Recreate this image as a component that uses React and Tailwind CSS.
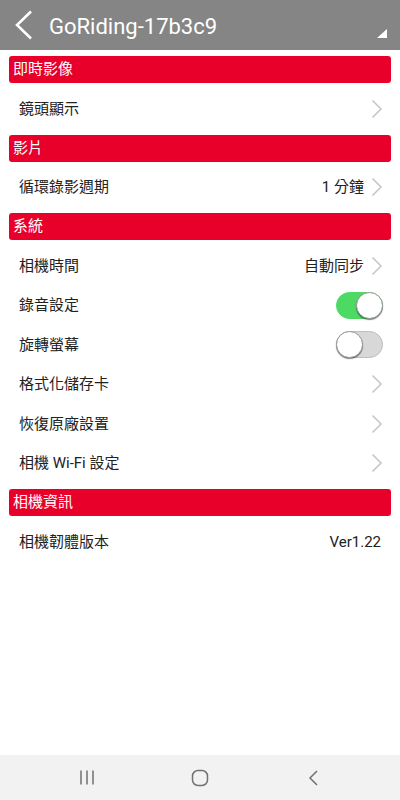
import React, { useState } from 'react';

const Chevron = () => (
  <svg width="12" height="20" viewBox="0 0 12 20" className="shrink-0">
    <path d="M1.5 1.5 L10 10 L1.5 18.5" fill="none" stroke="#c7c7c7" strokeWidth="1.6" />
  </svg>
);

const Toggle = ({ on, onClick }) => (
  <button
    onClick={onClick}
    className={`relative w-[47px] h-[27px] rounded-full border ${on ? 'bg-[#4cd964] border-[#4cd964]' : 'bg-[#d8d8d8] border-[#bdbdbd]'}`}
  >
    <span
      className={`absolute top-[-1px] w-[27px] h-[27px] rounded-full bg-white border border-[#9a9a9a] shadow-[0_1px_1px_rgba(0,0,0,0.5)] ${on ? 'right-[-1px]' : 'left-[-1px]'}`}
    />
  </button>
);

const Section = ({ title }) => (
  <div className="mx-[9px] my-[6px] h-[27px] rounded-[3px] bg-[#e8002b] flex items-center px-[4px] text-white text-[15px]">
    {title}
  </div>
);

const Row = ({ label, value, chevron, children }) => (
  <div className={`h-[39.5px] flex items-center pl-[19px] ${chevron || children ? 'pr-[17px]' : 'pr-[19px]'} text-[#222] text-[15px]`}>
    <span className="flex-1">{label}</span>
    {value && <span className={chevron ? 'mr-[7px]' : ''}>{value}</span>}
    {chevron && <Chevron />}
    {children}
  </div>
);

const App = () => {
  const [audio, setAudio] = useState(true);
  const [rotate, setRotate] = useState(false);

  return (
    <div
      className="w-[400px] h-[800px] bg-white flex flex-col"
      style={{ fontFamily: 'Roboto, "Noto Sans CJK TC", sans-serif' }}
    >
      <div className="h-[50px] bg-[#858585] flex items-center relative shrink-0">
        <svg width="20" height="30" viewBox="0 0 20 30" className="ml-[14px]">
          <path d="M17 1.5 L3 15 L17 28.5" fill="none" stroke="white" strokeWidth="2.6" />
        </svg>
        <span className="ml-[15px] mt-[2px] text-white text-[22px] font-normal">GoRiding-17b3c9</span>
        <svg width="10" height="9" viewBox="0 0 10 9" className="absolute left-[377px] top-[29px]">
          <path d="M10 0 L10 9 L0 9 Z" fill="white" />
        </svg>
      </div>

      <div className="flex-1">
        <Section title="即時影像" />
        <Row label="鏡頭顯示" chevron />
        <Section title="影片" />
        <Row label="循環錄影週期" value="1 分鐘" chevron />
        <Section title="系統" />
        <Row label="相機時間" value="自動同步" chevron />
        <Row label="錄音設定">
          <Toggle on={audio} onClick={() => setAudio(!audio)} />
        </Row>
        <Row label="旋轉螢幕">
          <Toggle on={rotate} onClick={() => setRotate(!rotate)} />
        </Row>
        <Row label="格式化儲存卡" chevron />
        <Row label="恢復原廠設置" chevron />
        <Row label="相機 Wi-Fi 設定" chevron />
        <Section title="相機資訊" />
        <Row label="相機韌體版本" value="Ver1.22" />
      </div>

      <div className="h-[45px] bg-[#f2f2f2] flex items-center justify-center gap-[93px] shrink-0">
        <div className="w-[20px] flex justify-center">
          <svg width="16" height="15" viewBox="0 0 16 15">
            <path d="M2 0.5 V14.5 M8 0.5 V14.5 M14 0.5 V14.5" stroke="#707070" strokeWidth="1.5" />
          </svg>
        </div>
        <div className="w-[20px] flex justify-center">
          <svg width="18" height="18" viewBox="0 0 18 18">
            <rect x="1.5" y="1.5" width="15" height="15" rx="5.5" fill="none" stroke="#707070" strokeWidth="1.5" />
          </svg>
        </div>
        <div className="w-[20px] flex justify-center">
          <svg width="11" height="16" viewBox="0 0 11 16">
            <path d="M9 1 L2 8 L9 15" fill="none" stroke="#707070" strokeWidth="1.5" />
          </svg>
        </div>
      </div>
    </div>
  );
};

export default App;
